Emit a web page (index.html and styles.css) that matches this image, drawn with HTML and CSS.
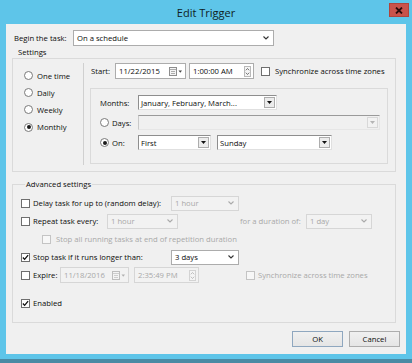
FILE: index.html
```html
<!DOCTYPE html>
<html>
<head>
<meta charset="utf-8">
<title>Edit Trigger</title>
<link rel="stylesheet" href="styles.css">
</head>
<body>
<div class="window">
  <div class="titlebar">
    <div class="title">Edit Trigger</div>
    <div class="close">
      <svg width="8" height="7" viewBox="0 0 8 7"><path d="M1 0.5 L7 6.5 M7 0.5 L1 6.5" stroke="#2a0c0c" stroke-width="1.8" fill="none"/></svg>
    </div>
  </div>
  <div class="frame">
    <div class="client">
      <div class="begin-row">
        <span class="begin-lbl">Begin the task:</span>
        <div class="combo begin-combo">
          <span class="ctext">On a schedule</span>
          <svg class="chev" width="6" height="4" viewBox="0 0 6 4"><path d="M0.5 0.5 L3 3 L5.5 0.5" stroke="#333" stroke-width="1.1" fill="none"/></svg>
        </div>
      </div>

      <div class="sec-label">Settings</div>
      <div class="settings-box">
        <div class="sched-col">
          <div class="radio-row"><span class="rb"></span><span>One time</span></div>
          <div class="radio-row"><span class="rb"></span><span>Daily</span></div>
          <div class="radio-row"><span class="rb"></span><span>Weekly</span></div>
          <div class="radio-row"><span class="rb on"></span><span>Monthly</span></div>
        </div>
        <div class="sched-detail">
          <div class="start-row">
            <span class="start-lbl">Start:</span>
            <div class="field date-field">
              <span class="ftext">11/22/2015</span>
              <svg class="cal" width="14" height="9" viewBox="0 0 14 9"><rect x="0.5" y="0.5" width="7" height="8" fill="#f4f4f4" stroke="#8d8d8d"/><path d="M0.5 2.5 H7.5 M2 4.5 H6 M2 6.5 H6" stroke="#9a9a9a" stroke-width="0.8"/><path d="M9.5 3.5 L13 3.5 L11.25 5.7 Z" fill="#444"/></svg>
            </div>
            <div class="field time-field">
              <span class="ftext">1:00:00 AM</span>
              <svg class="spin" width="7" height="11" viewBox="0 0 7 11"><rect x="0.5" y="0.5" width="6" height="10" fill="#f4f4f4" stroke="#b9b9b9"/><path d="M1.8 4.3 L3.5 2.5 L5.2 4.3 M1.8 6.7 L3.5 8.5 L5.2 6.7" stroke="#555" stroke-width="0.8" fill="none"/></svg>
            </div>
            <span class="cb sync-cb"></span>
            <span class="sync-lbl">Synchronize across time zones</span>
          </div>
          <div class="monthly-box">
            <div class="m-row">
              <span class="m-lbl">Months:</span>
              <div class="ecombo months-combo">
                <span class="etext">January, February, March...</span>
                <span class="dbtn"><svg width="5" height="3" viewBox="0 0 5 3"><path d="M0 0 H5 L2.5 3 Z" fill="#111"/></svg></span>
              </div>
            </div>
            <div class="m-row">
              <span class="m-lbl"><span class="rb"></span>Days:</span>
              <div class="ecombo days-combo disabled">
                <span class="etext"></span>
                <span class="dbtn"><svg width="5" height="3" viewBox="0 0 5 3"><path d="M0 0 H5 L2.5 3 Z" fill="#b5b5b5"/></svg></span>
              </div>
            </div>
            <div class="m-row">
              <span class="m-lbl"><span class="rb on"></span>On:</span>
              <div class="ecombo first-combo">
                <span class="etext">First</span>
                <span class="dbtn"><svg width="5" height="3" viewBox="0 0 5 3"><path d="M0 0 H5 L2.5 3 Z" fill="#111"/></svg></span>
              </div>
              <div class="ecombo sunday-combo">
                <span class="etext">Sunday</span>
                <span class="dbtn"><svg width="5" height="3" viewBox="0 0 5 3"><path d="M0 0 H5 L2.5 3 Z" fill="#111"/></svg></span>
              </div>
            </div>
          </div>
        </div>
      </div>

      <fieldset class="adv">
        <legend>Advanced settings</legend>
        <div class="a-row">
          <span class="cb"></span>
          <span class="a-lbl delay-lbl">Delay task for up to (random delay):</span>
          <div class="combo sm disabled delay-combo">
            <span class="ctext">1 hour</span>
            <svg class="chev" width="6" height="4" viewBox="0 0 6 4"><path d="M0.5 0.5 L3 3 L5.5 0.5" stroke="#aaa" stroke-width="1.1" fill="none"/></svg>
          </div>
        </div>
        <div class="a-row">
          <span class="cb"></span>
          <span class="a-lbl repeat-lbl">Repeat task every:</span>
          <div class="combo sm disabled repeat-combo">
            <span class="ctext">1 hour</span>
            <svg class="chev" width="6" height="4" viewBox="0 0 6 4"><path d="M0.5 0.5 L3 3 L5.5 0.5" stroke="#aaa" stroke-width="1.1" fill="none"/></svg>
          </div>
          <span class="dis-text dur-lbl">for a duration of:</span>
          <div class="combo sm disabled dur-combo">
            <span class="ctext">1 day</span>
            <svg class="chev" width="6" height="4" viewBox="0 0 6 4"><path d="M0.5 0.5 L3 3 L5.5 0.5" stroke="#aaa" stroke-width="1.1" fill="none"/></svg>
          </div>
        </div>
        <div class="a-row indent">
          <span class="cb dis"></span>
          <span class="a-lbl dis-text">Stop all running tasks at end of repetition duration</span>
        </div>
        <div class="a-row">
          <span class="cb checked"><svg width="8" height="7" viewBox="0 0 8 7"><path d="M1 3.5 L3 5.6 L7 0.8" stroke="#111" stroke-width="1.5" fill="none"/></svg></span>
          <span class="a-lbl delay-lbl">Stop task if it runs longer than:</span>
          <div class="combo sm stop-combo">
            <span class="ctext">3 days</span>
            <svg class="chev" width="6" height="4" viewBox="0 0 6 4"><path d="M0.5 0.5 L3 3 L5.5 0.5" stroke="#333" stroke-width="1.1" fill="none"/></svg>
          </div>
        </div>
        <div class="a-row">
          <span class="cb"></span>
          <span class="a-lbl expire-lbl">Expire:</span>
          <div class="field disabled exp-date">
            <span class="ftext">11/18/2016</span>
            <svg class="cal" width="14" height="9" viewBox="0 0 14 9"><rect x="0.5" y="0.5" width="7" height="8" fill="#f4f4f4" stroke="#bdbdbd"/><path d="M0.5 2.5 H7.5 M2 4.5 H6 M2 6.5 H6" stroke="#c4c4c4" stroke-width="0.8"/><path d="M9.5 3.5 L13 3.5 L11.25 5.7 Z" fill="#b0b0b0"/></svg>
          </div>
          <div class="field disabled exp-time">
            <span class="ftext">2:35:49 PM</span>
            <svg class="spin" width="7" height="11" viewBox="0 0 7 11"><rect x="0.5" y="0.5" width="6" height="10" fill="#f4f4f4" stroke="#d3d3d3"/><path d="M1.8 4.3 L3.5 2.5 L5.2 4.3 M1.8 6.7 L3.5 8.5 L5.2 6.7" stroke="#b0b0b0" stroke-width="0.8" fill="none"/></svg>
          </div>
          <span class="cb dis exp-sync-cb"></span>
          <span class="a-lbl dis-text">Synchronize across time zones</span>
        </div>
        <div class="a-row enabled-row">
          <span class="cb checked"><svg width="8" height="7" viewBox="0 0 8 7"><path d="M1 3.5 L3 5.6 L7 0.8" stroke="#111" stroke-width="1.5" fill="none"/></svg></span>
          <span class="a-lbl">Enabled</span>
        </div>
      </fieldset>

      <div class="footer">
        <div class="btn ok">OK</div>
        <div class="btn">Cancel</div>
      </div>
    </div>
  </div>
</div>
</body>
</html>
```

FILE: styles.css
```css
* { box-sizing: border-box; }
html, body { margin: 0; padding: 0; }
body {
  font-family: "Open Sans", "Noto Sans", sans-serif;
  font-size: 7.7px;
  color: #0c0c0c;
  background: #ffffff;
}
.window {
  width: 412px;
  height: 363px;
  background: #5ec5e9;
  border-bottom: 4px solid #4a8aa4;
  display: flex;
  flex-direction: column;
  overflow: hidden;
}
.titlebar {
  height: 24px;
  flex: none;
  display: grid;
  grid-template-columns: 1fr auto 1fr;
  align-items: start;
}
.title {
  grid-column: 2;
  font-size: 11px;
  line-height: 26px;
  color: #0f1d24;
}
.close {
  grid-column: 3;
  justify-self: end;
  margin: 3px 3px 0 0;
  width: 20px;
  height: 14px;
  background: #c9534b;
  border: 1px solid #b0443c;
  display: flex;
  align-items: center;
  justify-content: center;
}
.frame {
  flex: 1;
  display: flex;
  padding: 0 6px 5px 6px;
}
.client {
  flex: 1;
  background: #f0f0f0;
  display: flex;
  flex-direction: column;
}

/* begin row */
.begin-row {
  margin-top: 6px;
  height: 16px;
  padding-left: 8px;
  display: flex;
  align-items: center;
}
.begin-lbl { width: 59px; }
.combo {
  display: flex;
  align-items: center;
  height: 16px;
  border: 1px solid #acacac;
  background: #ffffff;
  padding: 0 4px 0 3px;
}
.combo .ctext { flex: 1; white-space: nowrap; }
.begin-combo { width: 201px; }
.combo.sm { height: 15px; }
.combo.disabled { background: #f2f2f2; border-color: #d6d6d6; color: #a8a8a8; }

/* settings */
.sec-label {
  margin-left: 12px;
  height: 12px;
  line-height: 12px;
}
.settings-box {
  margin-left: 6px;
  width: 384px;
  height: 114px;
  border: 1px solid #dadada;
  display: flex;
}
.sched-col {
  width: 70px;
  padding-top: 8px;
  padding-left: 11px;
}
.radio-row {
  height: 17.2px;
  display: flex;
  align-items: center;
  gap: 4px;
}
.rb {
  width: 9px;
  height: 9px;
  border-radius: 50%;
  border: 1px solid #7a7a7a;
  background: #ffffff;
  display: inline-flex;
  align-items: center;
  justify-content: center;
  flex: none;
}
.rb.on::after {
  content: "";
  width: 4px;
  height: 4px;
  border-radius: 50%;
  background: #1a1a1a;
}
.sched-detail {
  flex: 1;
  margin: 4px 0 6px 0;
  border-left: 1px solid #d0d0d0;
  padding-left: 7px;
}
.start-row {
  height: 16px;
  display: flex;
  align-items: center;
}
.start-lbl { width: 24px; }
.field {
  height: 16px;
  border: 1px solid #acacac;
  background: #ffffff;
  display: flex;
  align-items: center;
  padding: 0 2px 0 3px;
}
.field .ftext { flex: 1; white-space: nowrap; }
.field.disabled { background: #f2f2f2; border-color: #d6d6d6; color: #a8a8a8; }
.date-field { width: 71px; }
.time-field { width: 65px; margin-left: 3px; }
.cb {
  width: 9px;
  height: 9px;
  border: 1px solid #6e6e6e;
  background: #ffffff;
  flex: none;
  display: inline-flex;
  align-items: center;
  justify-content: center;
}
.cb.dis { border-color: #c4c4c4; background: #f7f7f7; }
.sync-cb { margin-left: 7px; }
.sync-lbl { margin-left: 5px; white-space: nowrap; }

.monthly-box {
  margin-top: 9px;
  margin-left: -1px;
  width: 298px;
  height: 76px;
  border: 1px solid #dadada;
  padding: 6px 0 0 9px;
  display: flex;
  flex-direction: column;
  gap: 5px;
}
.m-row {
  height: 15px;
  display: flex;
  align-items: center;
}
.m-lbl {
  width: 38px;
  display: flex;
  align-items: center;
  gap: 3px;
}
.ecombo {
  height: 15px;
  display: flex;
  align-items: center;
  background: #ffffff;
  border: 1px solid;
  border-color: #8e8e8e #e0e0e0 #e0e0e0 #8e8e8e;
}
.ecombo .etext { flex: 1; padding-left: 2px; white-space: nowrap; }
.dbtn {
  width: 11px;
  height: 11px;
  margin-right: 1px;
  border: 1px solid #adadad;
  background: #ececec;
  display: flex;
  align-items: center;
  justify-content: center;
}
.ecombo.disabled { background: #f0f0f0; border-color: #9a9a9a #e6e6e6 #e6e6e6 #c8c8c8; }
.ecombo.disabled .dbtn { border-color: #d8d8d8; background: #f2f2f2; }
.months-combo { width: 139px; }
.days-combo { width: 242px; }
.first-combo { width: 73px; }
.sunday-combo { width: 115px; margin-left: 6px; }

/* advanced */
.adv {
  margin: 6px 0 0 6px;
  width: 384px;
  border: 1px solid #dadada;
  padding: 4px 0 10px 8px;
  min-width: 0;
}
.adv legend {
  margin-left: 4px;
  padding: 0 1px;
  line-height: 12px;
}
.a-row {
  height: 18px;
  display: flex;
  align-items: center;
}
.a-row .a-lbl { margin-left: 3px; white-space: nowrap; }
.delay-lbl { width: 138px; }
.repeat-lbl { width: 74px; }
.delay-combo { width: 68px; }
.repeat-combo { width: 71px; }
.dur-lbl { margin-left: 62px; width: 66px; white-space: nowrap; }
.dur-combo { width: 66px; }
.stop-combo { width: 68px; }
.indent { padding-left: 21px; }
.indent .a-lbl { margin-left: 5px; }
.dis-text { color: #a8a8a8; }
.expire-lbl { width: 27px; }
.exp-date { width: 69px; }
.exp-time { width: 65px; margin-left: 5px; }
.exp-sync-cb { margin-left: 47px; }
.enabled-row { margin-top: 10px; }

/* footer */
.footer {
  margin-top: 8px;
  padding-right: 6px;
  display: flex;
  justify-content: flex-end;
  gap: 6px;
}
.btn {
  width: 51px;
  height: 16px;
  border: 1px solid #adadad;
  background: linear-gradient(#f0f0f0, #e5e5e5);
  display: flex;
  align-items: center;
  justify-content: center;
}
.btn.ok { border-color: #8fa7bf; }
```
